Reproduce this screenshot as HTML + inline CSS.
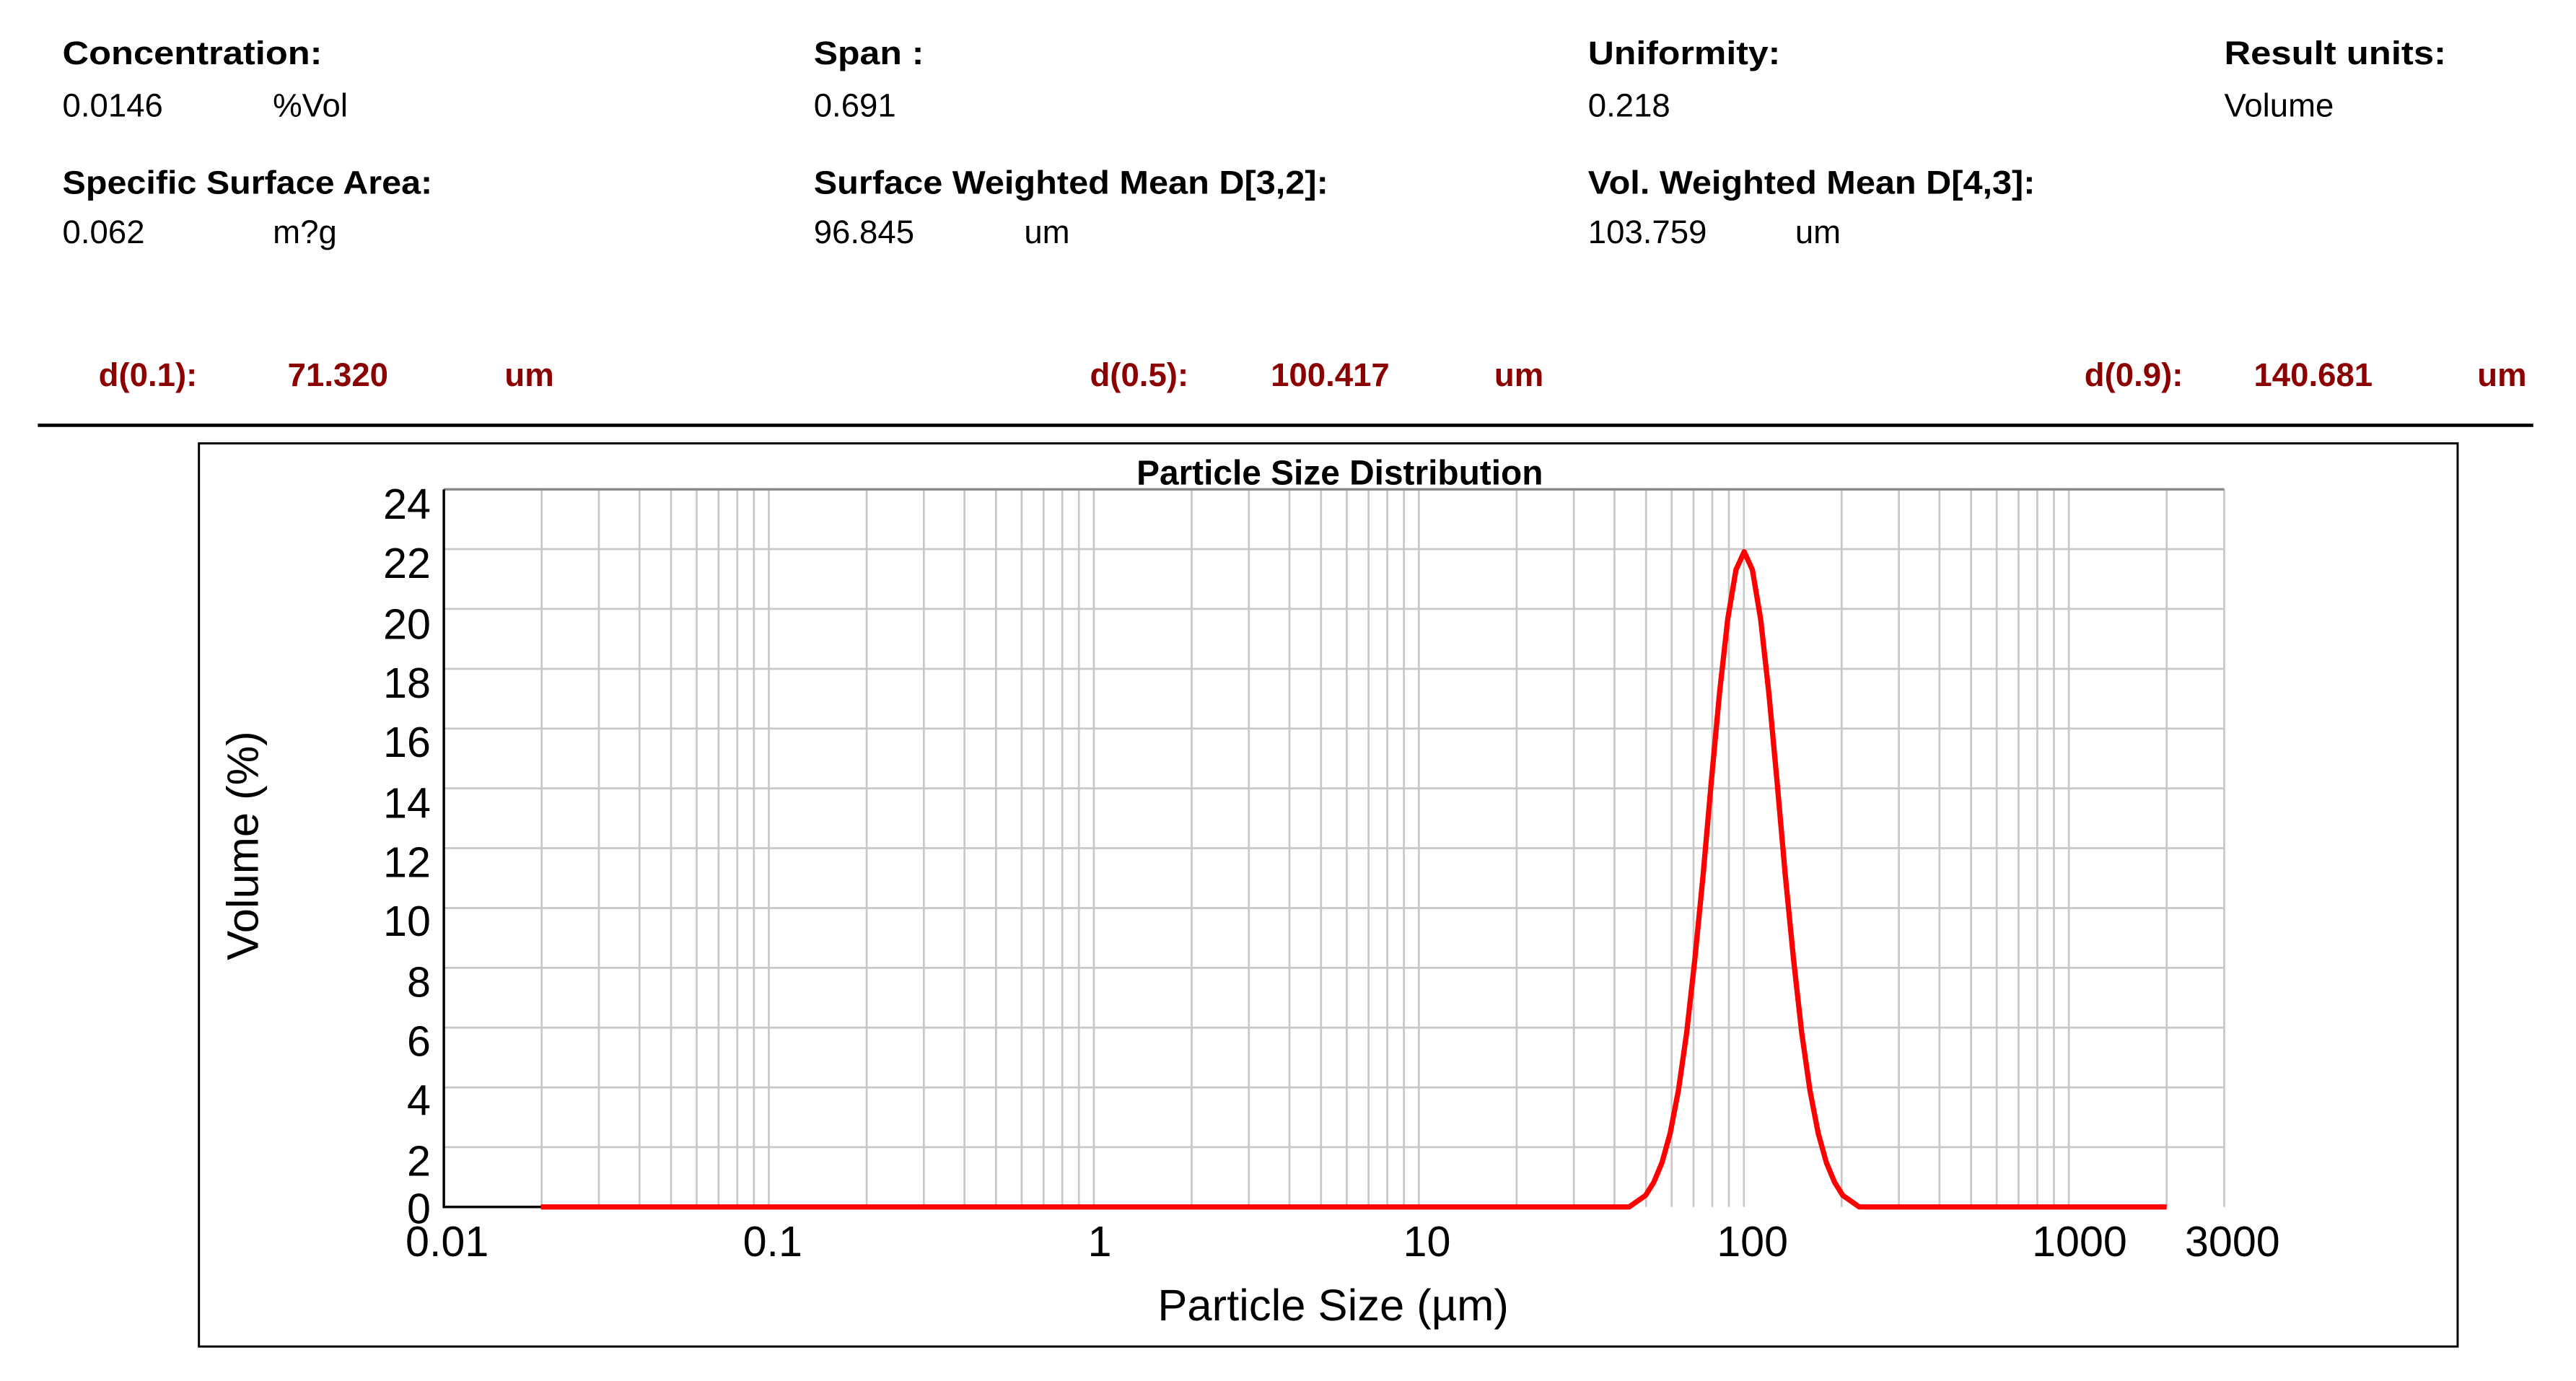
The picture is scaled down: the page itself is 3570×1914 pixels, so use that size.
<!DOCTYPE html>
<html><head><meta charset="utf-8"><style>html,body{margin:0;padding:0;background:#fff}svg{display:block}</style></head>
<body>
<svg width="3570" height="1914" viewBox="0 0 1567 841" preserveAspectRatio="none" xmlns="http://www.w3.org/2000/svg" font-family="Liberation Sans, Arial, sans-serif">
<rect width="1567" height="841" fill="#fff"/>
<g font-size="20" fill="#000">
<g font-weight="bold">
<text x="38" y="39" textLength="158" lengthAdjust="spacingAndGlyphs">Concentration:</text>
<text x="495" y="39" textLength="67" lengthAdjust="spacingAndGlyphs">Span :</text>
<text x="966" y="39" textLength="117" lengthAdjust="spacingAndGlyphs">Uniformity:</text>
<text x="1353" y="39" textLength="135" lengthAdjust="spacingAndGlyphs">Result units:</text>
<text x="38" y="118" textLength="225" lengthAdjust="spacingAndGlyphs">Specific Surface Area:</text>
<text x="495" y="118" textLength="313" lengthAdjust="spacingAndGlyphs">Surface Weighted Mean D[3,2]:</text>
<text x="966" y="118" textLength="272" lengthAdjust="spacingAndGlyphs">Vol. Weighted Mean D[4,3]:</text>
</g>
<text x="38" y="71">0.0146</text><text x="166" y="71">%Vol</text>
<text x="495" y="71">0.691</text>
<text x="966" y="71">0.218</text>
<text x="1353" y="71">Volume</text>
<text x="38" y="148">0.062</text><text x="166" y="148">m?g</text>
<text x="495" y="148">96.845</text><text x="623" y="148">um</text>
<text x="966" y="148">103.759</text><text x="1092" y="148">um</text>
</g>
<g font-size="20" font-weight="bold" fill="#8b0000">
<text x="60" y="235">d(0.1):</text><text x="175" y="235">71.320</text><text x="307" y="235">um</text>
<text x="663" y="235">d(0.5):</text><text x="773" y="235">100.417</text><text x="909" y="235">um</text>
<text x="1268" y="235">d(0.9):</text><text x="1371" y="235">140.681</text><text x="1507" y="235">um</text>
</g>
<line x1="23" y1="259" x2="1541" y2="259" stroke="#000" stroke-width="2"/>
<rect x="121" y="270" width="1374" height="550" fill="none" stroke="#000" stroke-width="1.3"/>
<text x="815" y="295" font-size="21" font-weight="bold" text-anchor="middle">Particle Size Distribution</text>
<g stroke="#c8c8c8" stroke-width="1.2">
<path d="M329.5 298V735M364.3 298V735M389 298V735M408.2 298V735M423.8 298V735M437.1 298V735M448.5 298V735M458.6 298V735M467.7 298V735M527.2 298V735M562 298V735M586.7 298V735M605.9 298V735M621.5 298V735M634.8 298V735M646.2 298V735M656.3 298V735M665.4 298V735M724.9 298V735M759.7 298V735M784.4 298V735M803.6 298V735M819.2 298V735M832.5 298V735M843.9 298V735M854 298V735M863.1 298V735M922.6 298V735M957.4 298V735M982.1 298V735M1001.3 298V735M1016.9 298V735M1030.2 298V735M1041.6 298V735M1051.7 298V735M1060.8 298V735M1120.3 298V735M1155.1 298V735M1179.8 298V735M1199 298V735M1214.6 298V735M1227.9 298V735M1239.3 298V735M1249.4 298V735M1258.5 298V735M1318 298V735M1353 298V735"/>
<path d="M270 334.4H1353M270 370.8H1353M270 407.3H1353M270 443.7H1353M270 480.1H1353M270 516.5H1353M270 553H1353M270 589.4H1353M270 625.8H1353M270 662.2H1353M270 698.6H1353"/>
</g>
<path d="M270 298H1353" stroke="#888" stroke-width="1.5"/>
<path d="M270 298V735H329" stroke="#000" stroke-width="1.5" fill="none"/>
<polyline fill="none" stroke="#f00" stroke-width="3.2" stroke-linejoin="round" points="329,735 991,735 1001,728 1006,720 1011,708 1016,690 1021,664 1026,629 1031,584 1036,533 1041,476 1046,422 1051,377 1056,347 1061,336 1066,347 1071,377 1076,422 1081,476 1086,533 1091,584 1096,629 1101,664 1106,690 1111,708 1116,720 1121,728 1131,735 1318,735"/>
<g font-size="26" text-anchor="end">
<text x="262" y="316">24</text><text x="262" y="352">22</text><text x="262" y="389">20</text><text x="262" y="425">18</text><text x="262" y="461">16</text><text x="262" y="498">14</text><text x="262" y="534">12</text><text x="262" y="570">10</text><text x="262" y="607">8</text><text x="262" y="643">6</text><text x="262" y="679">4</text><text x="262" y="716">2</text><text x="262" y="745">0</text>
</g>
<g font-size="26" text-anchor="middle">
<text x="272" y="765">0.01</text><text x="470" y="765">0.1</text><text x="669" y="765">1</text><text x="868" y="765">10</text><text x="1066" y="765">100</text><text x="1265" y="765">1000</text><text x="1358" y="765">3000</text>
</g>
<text x="811" y="804" font-size="27" text-anchor="middle">Particle Size (µm)</text>
<text transform="translate(157,515) rotate(-90)" font-size="27" text-anchor="middle">Volume (%)</text>
</svg>
</body></html>
